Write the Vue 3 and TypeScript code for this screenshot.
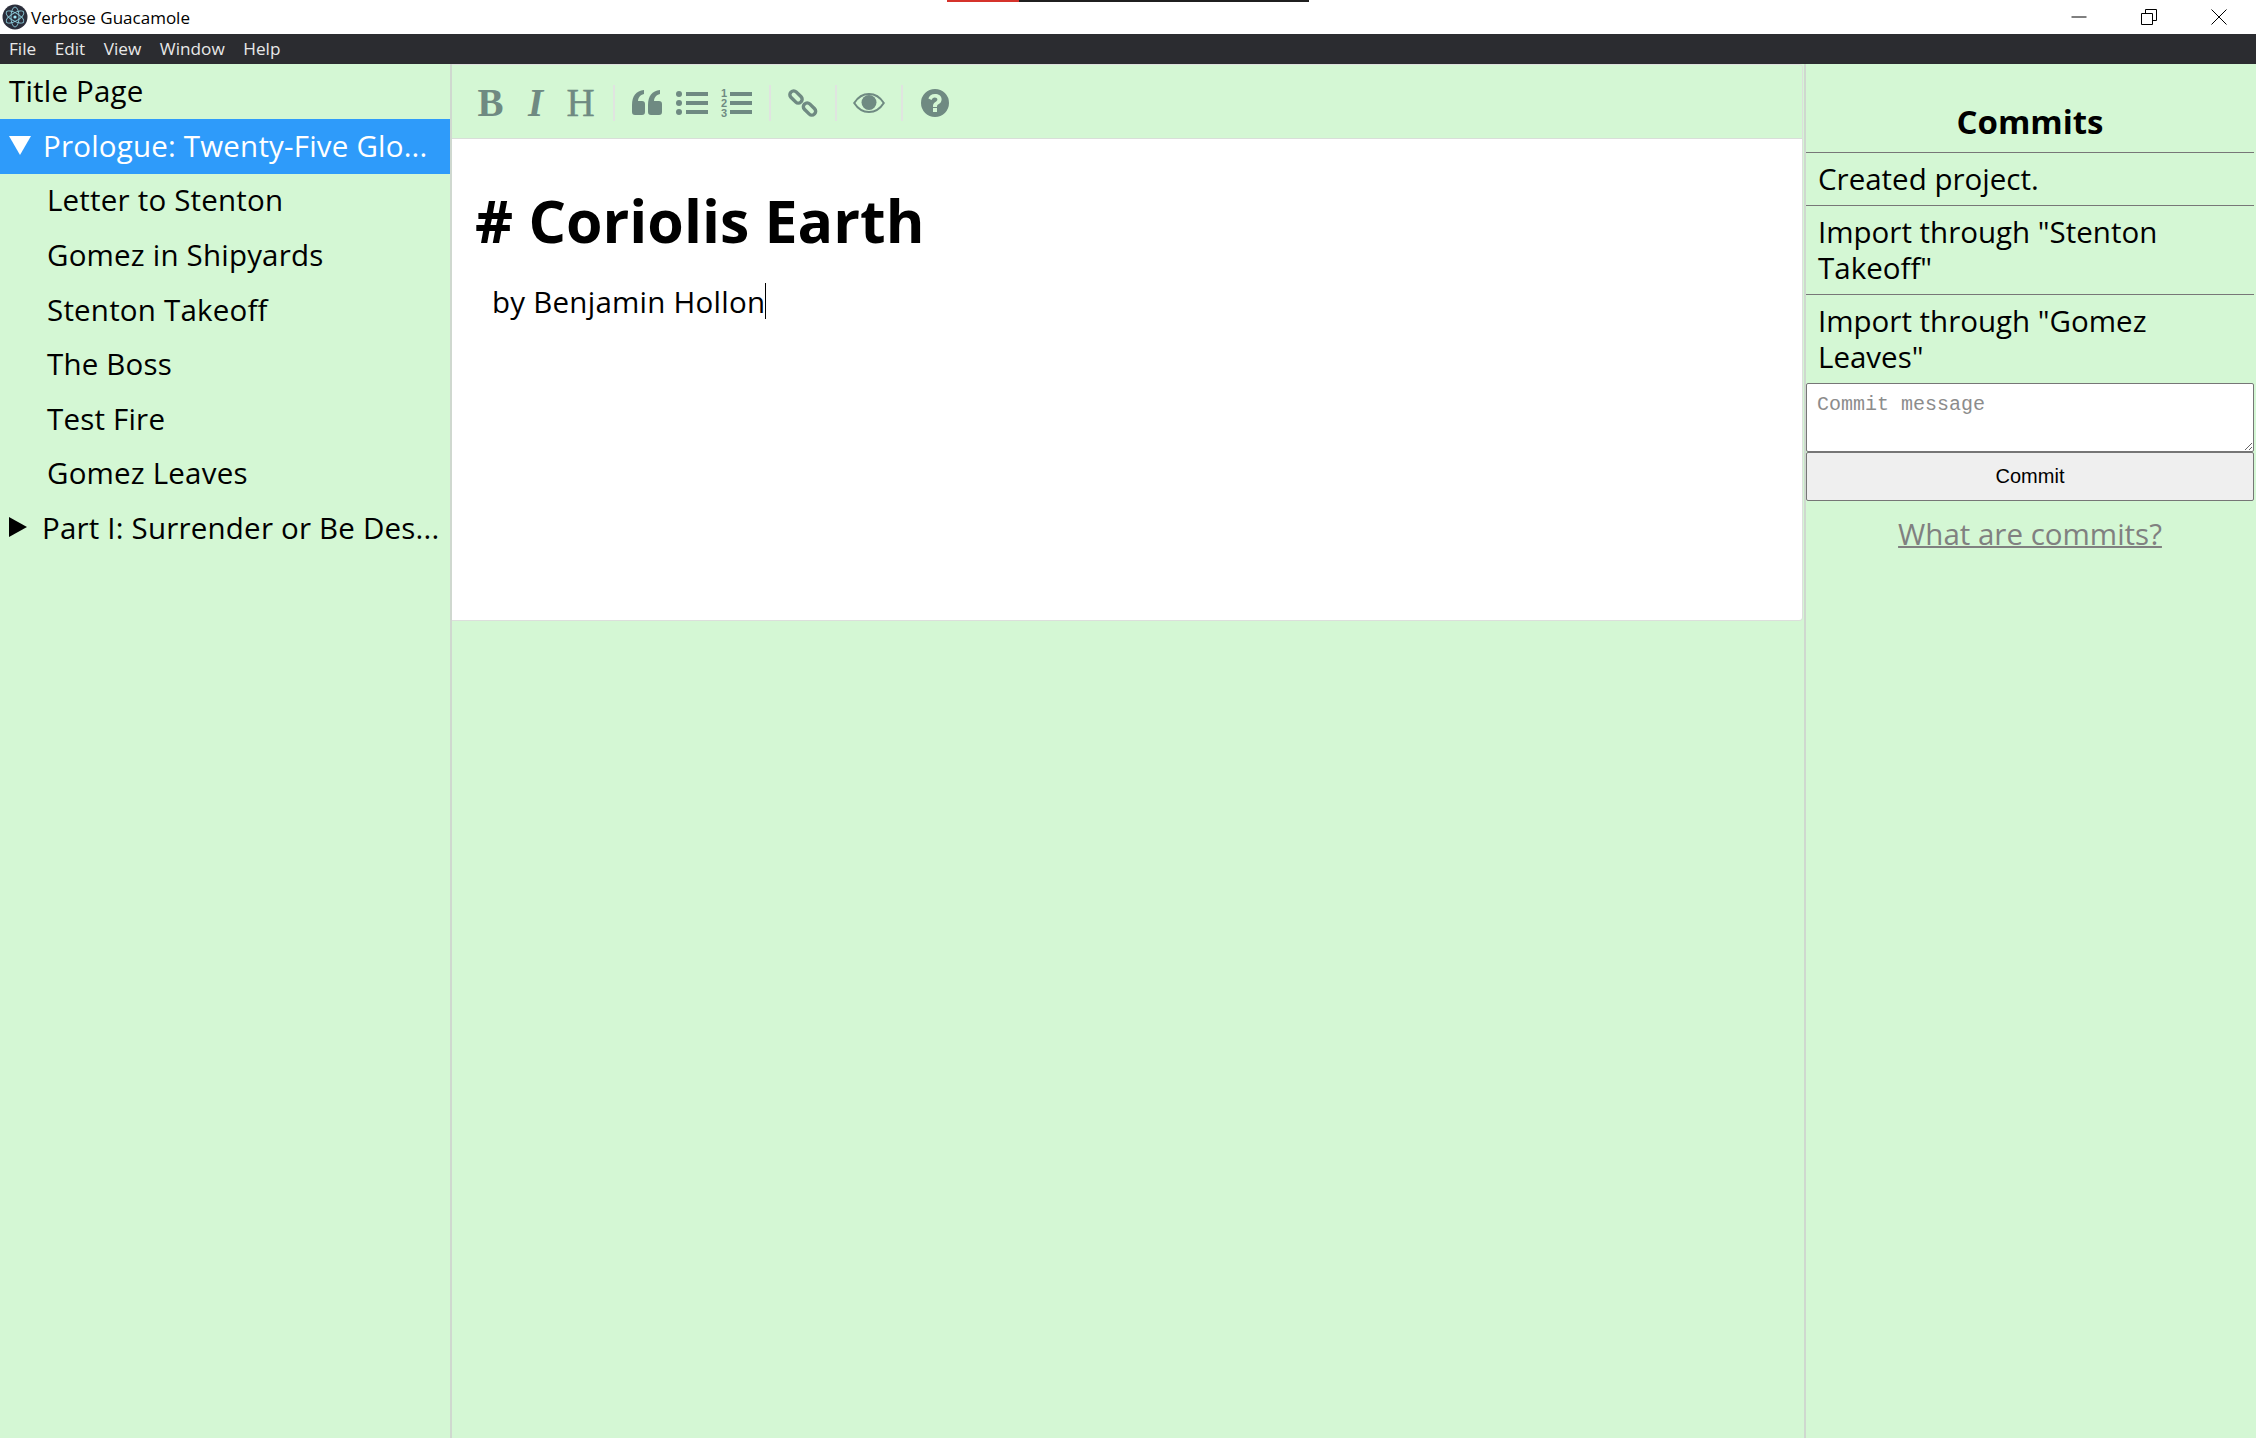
<template>
  <div class="app">
    <div class="load-strip"><span class="load-done"></span></div>
    <header class="titlebar">
      <svg class="logo" viewBox="0 0 26 26" width="26" height="26">
        <circle cx="13" cy="13" r="12.5" fill="#2b2e3b" />
        <g fill="none" stroke="#9feaf9" stroke-width="0.9" opacity="0.85">
          <ellipse cx="13" cy="13" rx="10" ry="4" transform="rotate(30 13 13)" />
          <ellipse cx="13" cy="13" rx="10" ry="4" transform="rotate(90 13 13)" />
          <ellipse cx="13" cy="13" rx="10" ry="4" transform="rotate(150 13 13)" />
        </g>
        <circle cx="13" cy="13" r="1.6" fill="#9feaf9" />
      </svg>
      <span class="app-name">Verbose Guacamole</span>
      <div class="window-controls">
        <svg width="16" height="16" viewBox="0 0 16 16"><path d="M0.5 8h15" stroke="#000" fill="none" /></svg>
        <svg width="16" height="16" viewBox="0 0 16 16">
          <path d="M0.5 4.5h11v11h-11zM4.5 4.5v-4h11v11h-4" stroke="#000" fill="none" />
        </svg>
        <svg width="16" height="16" viewBox="0 0 16 16"><path d="M0.5 0.5l15 15M15.5 0.5l-15 15" stroke="#000" fill="none" /></svg>
      </div>
    </header>
    <nav class="menubar">
      <span v-for="item in menuItems" :key="item" class="menu-item">{{ item }}</span>
    </nav>

    <main class="workspace">
      <aside class="chapters">
        <div class="chapter chapter--first">Title Page</div>
        <div class="chapter chapter--active">
          <span class="arrow arrow--down"></span>
          <span class="chapter-label">Prologue: Twenty-Five Glo...</span>
        </div>
        <div v-for="name in scenes" :key="name" class="chapter chapter--child">{{ name }}</div>
        <div class="chapter">
          <span class="arrow arrow--right"></span>
          <span class="chapter-label">Part I: Surrender or Be Des...</span>
        </div>
      </aside>

      <section class="editor">
        <div class="toolbar">
          <span class="tool tool--letter tool--bold">B</span>
          <span class="tool tool--letter tool--italic">I</span>
          <span class="tool tool--letter tool--heavy">H</span>
          <i class="sep"></i>
          <span class="tool">
            <svg width="30" height="26" viewBox="0 0 30 26">
              <path d="M0 15C0 6 4 1 12 0v4C8 5 6 8 6 11h4c2 0 3 1 3 3v8c0 2-1 3-3 3H3c-2 0-3-1-3-3z" />
              <path d="M16 15c0-9 4-14 12-15v4c-4 1-6 4-6 7h5c2 0 3 1 3 3v8c0 2-1 3-3 3h-8c-2 0-3-1-3-3z" />
            </svg>
          </span>
          <span class="tool">
            <svg width="32" height="24" viewBox="0 0 32 24">
              <circle cx="3" cy="3" r="3" /><circle cx="3" cy="12" r="3" /><circle cx="3" cy="21" r="3" />
              <rect x="10" y="1" width="22" height="4" /><rect x="10" y="10" width="22" height="4" /><rect x="10" y="19" width="22" height="4" />
            </svg>
          </span>
          <span class="tool tool--numbers">
            <span class="digits"><b>1</b><b>2</b><b>3</b></span>
            <span class="bars"><i></i><i></i><i></i></span>
          </span>
          <i class="sep"></i>
          <span class="tool">
            <svg width="30" height="28" viewBox="0 0 30 28">
              <g fill="none" stroke-width="3.4">
                <rect x="1" y="4.250" width="14" height="7.500" rx="3.500" transform="rotate(45 8 8)" />
                <rect x="14.500" y="16.250" width="14" height="7.500" rx="3.500" transform="rotate(45 21.500 20)" />
              </g>
            </svg>
          </span>
          <i class="sep"></i>
          <span class="tool">
            <svg width="32" height="22" viewBox="0 0 32 22">
              <path fill="none" stroke-width="2" d="M1.200 11C5 5 10 2 16 2s11 3 14.800 9C27 17 22 20 16 20S5 17 1.200 11z" />
              <circle cx="16" cy="10.500" r="7.500" />
            </svg>
          </span>
          <i class="sep"></i>
          <span class="tool">
            <svg width="28" height="28" viewBox="0 0 28 28">
              <path fill-rule="evenodd" d="M14 0a14 14 0 1 1 0 28a14 14 0 0 1 0-28zM12 19v4h4v-4zM14 5c-3.600 0-5.800 1.800-6.600 4.600l3.200 1.300c.5-1.500 1.500-2.500 3.200-2.500 1.500 0 2.600.8 2.600 2 0 1.100-.8 1.700-2 2.500-1.500 1-2.400 2-2.400 4v1h4v-.6c0-1 .6-1.500 1.800-2.300 1.700-1.100 2.800-2.400 2.800-4.800C20.600 6.900 17.600 5 14 5z" />
            </svg>
          </span>
        </div>
        <div class="document">
          <div class="heading"># Coriolis Earth</div>
          <div class="byline"><span>by Benjamin Hollon</span><i class="caret"></i></div>
        </div>
      </section>

      <aside class="commits">
        <h2 class="commits-title">Commits</h2>
        <div v-for="commit in commits" :key="commit" class="commit">{{ commit }}</div>
        <textarea class="commit-input" placeholder="Commit message"></textarea>
        <button type="button" class="commit-button">Commit</button>
        <a class="commit-help">What are commits?</a>
      </aside>
    </main>
  </div>
</template>

<script setup lang="ts">
const menuItems: string[] = ['File', 'Edit', 'View', 'Window', 'Help'];

const scenes: string[] = [
  'Letter to Stenton',
  'Gomez in Shipyards',
  'Stenton Takeoff',
  'The Boss',
  'Test Fire',
  'Gomez Leaves',
];

const commits: string[] = [
  'Created project.',
  'Import through "Stenton Takeoff"',
  'Import through "Gomez Leaves"',
];
</script>

<style scoped>
.app {
  position: relative;
  display: flex;
  flex-direction: column;
  height: 100vh;
  overflow: hidden;
  background: #d4f7d4;
  color: #000;
  font-family: "Open Sans", sans-serif;
}

/* thin loading strip over the title bar */
.load-strip {
  position: absolute;
  top: 0;
  left: 947px;
  width: 362px;
  height: 2px;
  background: #1f1f1f;
}

.load-done {
  display: block;
  width: 72px;
  height: 2px;
  background: #d5322b;
}

.titlebar {
  display: flex;
  align-items: center;
  flex: 0 0 34px;
  background: #fff;
  padding-left: 2px;
}

.logo {
  margin-right: 3px;
}

.app-name {
  font-size: 17px;
}

.window-controls {
  display: flex;
  gap: 54px;
  margin-left: auto;
  margin-right: 29px;
}

.menubar {
  display: flex;
  align-items: center;
  flex: 0 0 30px;
  gap: 18.500px;
  padding: 0 0 2px 9px;
  box-sizing: border-box;
  background: #2b2c30;
  color: #e8e8e8;
  font-size: 17.200px;
}

.workspace {
  display: flex;
  flex: 1;
  min-height: 0;
}

.chapters {
  flex: 0 0 452px;
  box-sizing: border-box;
  border-right: 2px solid #cfd8cf;
}

.chapter {
  display: flex;
  align-items: center;
  box-sizing: border-box;
  height: 54.600px;
  padding-left: 9px;
  padding-bottom: 2px;
  font-size: 29.500px;
  letter-spacing: 0.2px;
  white-space: nowrap;
}

.chapter--first {
  height: 55px;
}

.chapter--active {
  background: #2e9bfa;
  color: #fff;
}

.chapter--child {
  padding-left: 47px;
}

.arrow {
  flex: none;
  width: 0;
  height: 0;
  margin-right: 12px;
}

.arrow--down {
  border-left: 11px solid transparent;
  border-right: 11px solid transparent;
  border-top: 19px solid #fff;
}

.arrow--right {
  margin-right: 15px;
  border-top: 10px solid transparent;
  border-bottom: 10px solid transparent;
  border-left: 18px solid #000;
}

.editor {
  flex: 0 0 1351px;
  box-sizing: border-box;
  align-self: flex-start;
  border: 1px solid #dcdfdc;
  border-left: none;
  border-radius: 0 4px 4px 0;
  overflow: hidden;
}

.toolbar {
  display: flex;
  align-items: center;
  box-sizing: border-box;
  height: 74px;
  padding: 2px 0 0 16px;
  border-bottom: 1px solid #d9ded9;
  color: #6f8a82;
  fill: #6f8a82;
}

.tool {
  display: flex;
  align-items: center;
  justify-content: center;
  flex: 0 0 45px;
  height: 40px;
}

.tool svg g,
.tool svg path[fill='none'] {
  stroke: #6f8a82;
}

.tool--letter {
  font-family: "Liberation Serif", serif;
  font-size: 39px;
}

.tool--bold {
  font-weight: 700;
}

.tool--italic {
  font-style: italic;
  font-weight: 700;
}

.tool--heavy {
  -webkit-text-stroke: 0.4px #6f8a82;
}

.tool--numbers {
  gap: 3px;
}

.digits {
  display: flex;
  flex-direction: column;
  font-family: "Liberation Sans", sans-serif;
  font-size: 11px;
  line-height: 10px;
}

.digits b {
  font-weight: 700;
}

.bars {
  display: flex;
  flex-direction: column;
  gap: 5px;
}

.bars i {
  display: block;
  width: 22px;
  height: 4px;
  background: #6f8a82;
}

.sep {
  flex: 0 0 2px;
  height: 36px;
  margin: 0 9.500px;
  background: #e0e4e0;
}

.document {
  box-sizing: border-box;
  height: 481px;
  padding: 36px 23px 0;
  background: #fff;
}

.heading {
  font-size: 59px;
  font-weight: 700;
  line-height: 90px;
}

.byline {
  display: flex;
  align-items: center;
  height: 54px;
  margin-top: 9px;
  padding-left: 17px;
  font-size: 29.500px;
  letter-spacing: 0.25px;
}

.caret {
  width: 1px;
  height: 36px;
  background: #000;
}

.commits {
  display: flex;
  flex-direction: column;
  flex: 1;
  min-width: 0;
  border-left: 2px solid #cfd8cf;
  margin-left: 1px;
  padding-right: 2px;
}

.commits-title {
  box-sizing: border-box;
  height: 89px;
  margin: 0;
  padding-top: 35px;
  text-align: center;
  font-size: 33px;
  font-weight: 700;
  line-height: 45px;
  border-bottom: 1px solid #777;
}

.commit {
  padding: 8px 12px;
  font-size: 29.500px;
  line-height: 36px;
  border-bottom: 1px solid #777;
}

.commit:last-of-type {
  border-bottom: none;
}

.commit-input {
  display: block;
  box-sizing: border-box;
  width: 100%;
  height: 69px;
  padding: 9px 10px;
  font-family: "Liberation Mono", monospace;
  font-size: 20px;
  background: #fff;
  border: 1px solid #767676;
  border-radius: 2px;
}

.commit-input::placeholder {
  color: #8c8c8c;
}

.commit-button {
  display: block;
  width: 100%;
  height: 49px;
  font-family: "Liberation Sans", sans-serif;
  font-size: 20px;
  color: #000;
  background: #efefef;
  border: 1px solid #767676;
  border-radius: 2px;
}

.commit-help {
  margin-top: 13px;
  text-align: center;
  font-size: 29.500px;
  line-height: 40px;
  color: #808080;
  text-decoration: underline;
  text-decoration-thickness: 2px;
}
</style>

<style>
html,
body {
  margin: 0;
  padding: 0;
}
</style>
